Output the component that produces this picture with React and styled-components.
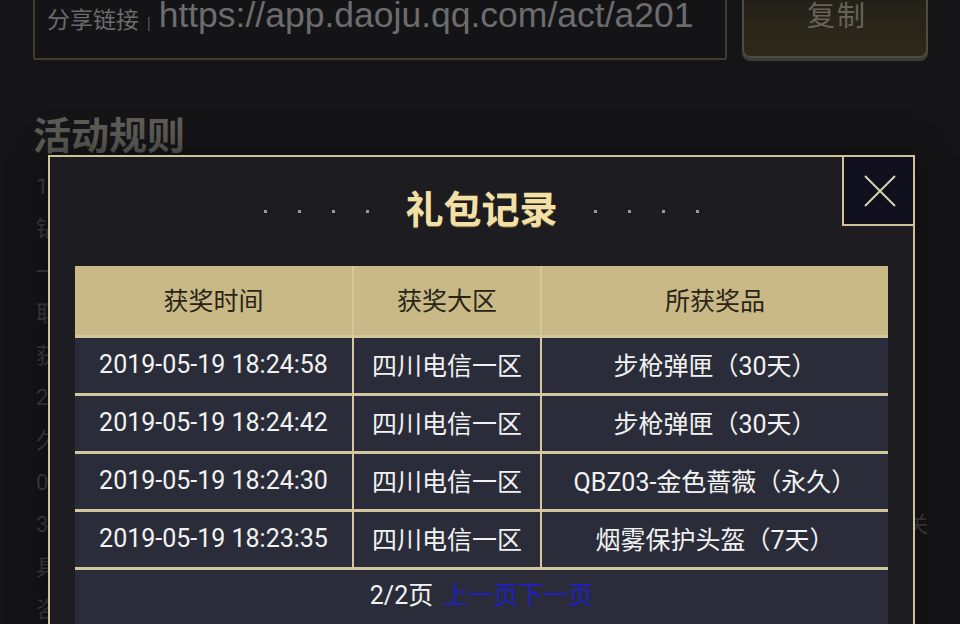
import React from "react";
import styled, { createGlobalStyle } from "styled-components";

const GlobalStyle = createGlobalStyle`
  html, body {
    margin: 0;
    padding: 0;
    background: #151518;
    overflow: hidden;
  }
  body {
    font-family: "Roboto", "Noto Sans CJK SC", sans-serif;
  }
  * {
    box-sizing: border-box;
  }
`;

const rules = [
  "1、活动期间，玩家登录游戏即可参与抽奖，每日次数有限",
  "钻石礼包可在活动页面中领取，领取后发放至游戏邮箱中",
  "一个QQ号只能绑定一个大区角色领取奖励",
  "取消绑定后无法再次领取，请谨慎操作",
  "获得的奖励将在24小时内发放到账",
  "2、分享活动链接给好友，好友参与后双方均可获得奖励",
  "久未登录的玩家回归后可额外获得一次抽奖机会",
  "0点刷新每日任务进度，请及时完成",
  "3、活动奖励以实际到账为准，如有疑问请联系客服人员进行咨询，我们将尽快为您处理相关事宜",
  "具体规则以游戏内公告为准",
  "咨询请前往官方论坛",
];

const records = [
  { time: "2019-05-19 18:24:58", area: "四川电信一区", prize: "步枪弹匣（30天）" },
  { time: "2019-05-19 18:24:42", area: "四川电信一区", prize: "步枪弹匣（30天）" },
  { time: "2019-05-19 18:24:30", area: "四川电信一区", prize: "QBZ03-金色蔷薇（永久）" },
  { time: "2019-05-19 18:23:35", area: "四川电信一区", prize: "烟雾保护头盔（7天）" },
];

const App = () => {
  return (
    <>
      <GlobalStyle />
      <Page>
        <ShareRow>
          <ShareBox>
            <ShareLabel>分享链接</ShareLabel>
            <ShareBar>|</ShareBar>
            <ShareUrl>https://app.daoju.qq.com/act/a201</ShareUrl>
          </ShareBox>
          <CopyButton>复制</CopyButton>
        </ShareRow>
        <RulesTitle>活动规则</RulesTitle>
        <Rules>
          {rules.map((r, i) => (
            <RuleLine key={i}>{r}</RuleLine>
          ))}
        </Rules>

        <Modal>
          <CloseBox>
            <svg width="34" height="34" viewBox="0 0 34 34">
              <path d="M2 2 L32 32 M32 2 L2 32" stroke="#d9d0ae" strokeWidth="2" fill="none" />
            </svg>
          </CloseBox>
          <TitleRow>
            <Dots>
              <Dot /><Dot /><Dot /><Dot />
            </Dots>
            <Title>礼包记录</Title>
            <Dots>
              <Dot /><Dot /><Dot /><Dot />
            </Dots>
          </TitleRow>
          <Table>
            <HeadCell>获奖时间</HeadCell>
            <HeadCell>获奖大区</HeadCell>
            <HeadCell>所获奖品</HeadCell>
            {records.map((r, i) => (
              <React.Fragment key={i}>
                <Cell>{r.time}</Cell>
                <Cell>{r.area}</Cell>
                <Cell>{r.prize}</Cell>
              </React.Fragment>
            ))}
            <Footer>
              <span>2/2页</span>
              <PageLink>上一页</PageLink>
              <PageLink>下一页</PageLink>
            </Footer>
          </Table>
        </Modal>
      </Page>
    </>
  );
};

export default App;

const Page = styled.div`
  position: relative;
  width: 960px;
  height: 624px;
  overflow: hidden;
  padding: 0 32px 0 33px;
  background: #151518;
`;

const ShareRow = styled.div`
  display: flex;
  gap: 15px;
  margin-top: -22px;
`;

const ShareBox = styled.div`
  width: 694px;
  height: 82px;
  border: 2px solid #453b2c;
  border-radius: 2px;
  background: #141417;
  display: flex;
  align-items: flex-start;
  padding: 15px 0 0 12px;
  white-space: nowrap;
  overflow: hidden;
`;

const ShareLabel = styled.span`
  font-family: "Noto Sans CJK SC", sans-serif;
  font-size: 23px;
  line-height: 28px;
  margin-top: 9px;
  color: #6b6b6b;
`;

const ShareBar = styled.span`
  font-family: "Liberation Sans", sans-serif;
  font-size: 14px;
  line-height: 28px;
  margin: 14px 8px 0 8px;
  color: #5a5a5a;
`;

const ShareUrl = styled.span`
  font-family: "Liberation Sans", sans-serif;
  font-size: 35.5px;
  line-height: 40px;
  color: #6c6c6e;
`;

const CopyButton = styled.div`
  width: 186px;
  height: 80px;
  border: 2px solid #4e4b45;
  border-top: none;
  border-radius: 0 0 8px 8px;
  background: linear-gradient(180deg, #1e1c18 0%, #2a2619 70%, #2e2818 100%);
  box-shadow: 0 3px 0 #3e3c39;
  display: flex;
  justify-content: center;
  padding: 18px 0 0 4px;
  font-family: "Noto Sans CJK SC", sans-serif;
  font-size: 28px;
  line-height: 36px;
  letter-spacing: 2px;
  color: #66625a;
`;

const RulesTitle = styled.h2`
  margin: 52px 0 0 0;
  font-family: "Noto Sans CJK SC", sans-serif;
  font-size: 38px;
  font-weight: 700;
  line-height: 42px;
  color: #5d5b55;
`;

const Rules = styled.div`
  margin-top: 12px;
  display: flex;
  flex-direction: column;
  overflow: hidden;
`;

const RuleLine = styled.div`
  font-family: "Roboto", "Noto Sans CJK SC", sans-serif;
  font-size: 22px;
  line-height: 42.3px;
  color: #3d3d40;
  white-space: nowrap;
  padding-left: 3px;
`;

const Modal = styled.div`
  position: absolute;
  left: 48px;
  top: 155px;
  width: 867px;
  height: 520px;
  border: 2px solid #cdc29b;
  background: #1c1c21;
  padding: 0 25px;
  box-shadow: 0 0 30px rgba(0, 0, 0, 0.5);
`;

const CloseBox = styled.div`
  position: absolute;
  top: 0;
  right: 0;
  width: 71px;
  height: 69px;
  background: #0f0f1e;
  border-left: 2px solid #cdc29b;
  border-bottom: 2px solid #cdc29b;
  display: flex;
  align-items: center;
  justify-content: center;
  padding-left: 2px;
`;

const TitleRow = styled.div`
  height: 109px;
  padding-bottom: 9px;
  display: flex;
  align-items: center;
  justify-content: center;
  gap: 36px;
`;

const Dots = styled.div`
  display: flex;
  gap: 31px;
  padding-top: 8px;
`;

const Dot = styled.span`
  width: 3px;
  height: 3px;
  background: #9a9a9c;
`;

const Title = styled.h1`
  margin: 0;
  font-family: "Noto Sans CJK SC", sans-serif;
  font-size: 38px;
  font-weight: 700;
  line-height: 44px;
  color: #f2e0a6;
  text-shadow: 0 1px 0 #7a6a40;
`;

const Table = styled.div`
  display: grid;
  grid-template-columns: 277px 186px 346px;
  grid-template-rows: 69px repeat(4, 55px) 70px;
  column-gap: 2px;
  row-gap: 3px;
  background: #d3c79e;
  width: 813px;
`;

const HeadCell = styled.div`
  background: #c8b986;
  display: flex;
  align-items: center;
  justify-content: center;
  padding-bottom: 4px;
  font-family: "Noto Sans CJK SC", sans-serif;
  font-size: 25px;
  color: #2a2417;
`;

const Cell = styled.div`
  background: #2a2d39;
  display: flex;
  align-items: center;
  justify-content: center;
  padding-bottom: 3px;
  font-family: "Roboto", "Noto Sans CJK SC", sans-serif;
  font-size: 25px;
  color: #f2f2f2;
  white-space: nowrap;
`;

const Footer = styled.div`
  grid-column: 1 / -1;
  background: #2a2d39;
  display: flex;
  justify-content: center;
  align-items: flex-start;
  padding-top: 9px;
  font-family: "Roboto", "Noto Sans CJK SC", sans-serif;
  font-size: 25px;
  line-height: 34px;
  color: #f2f2f2;
  > span:first-child {
    margin-right: 10px;
  }
`;

const PageLink = styled.span`
  color: #1f1fc4;
  cursor: pointer;
`;
